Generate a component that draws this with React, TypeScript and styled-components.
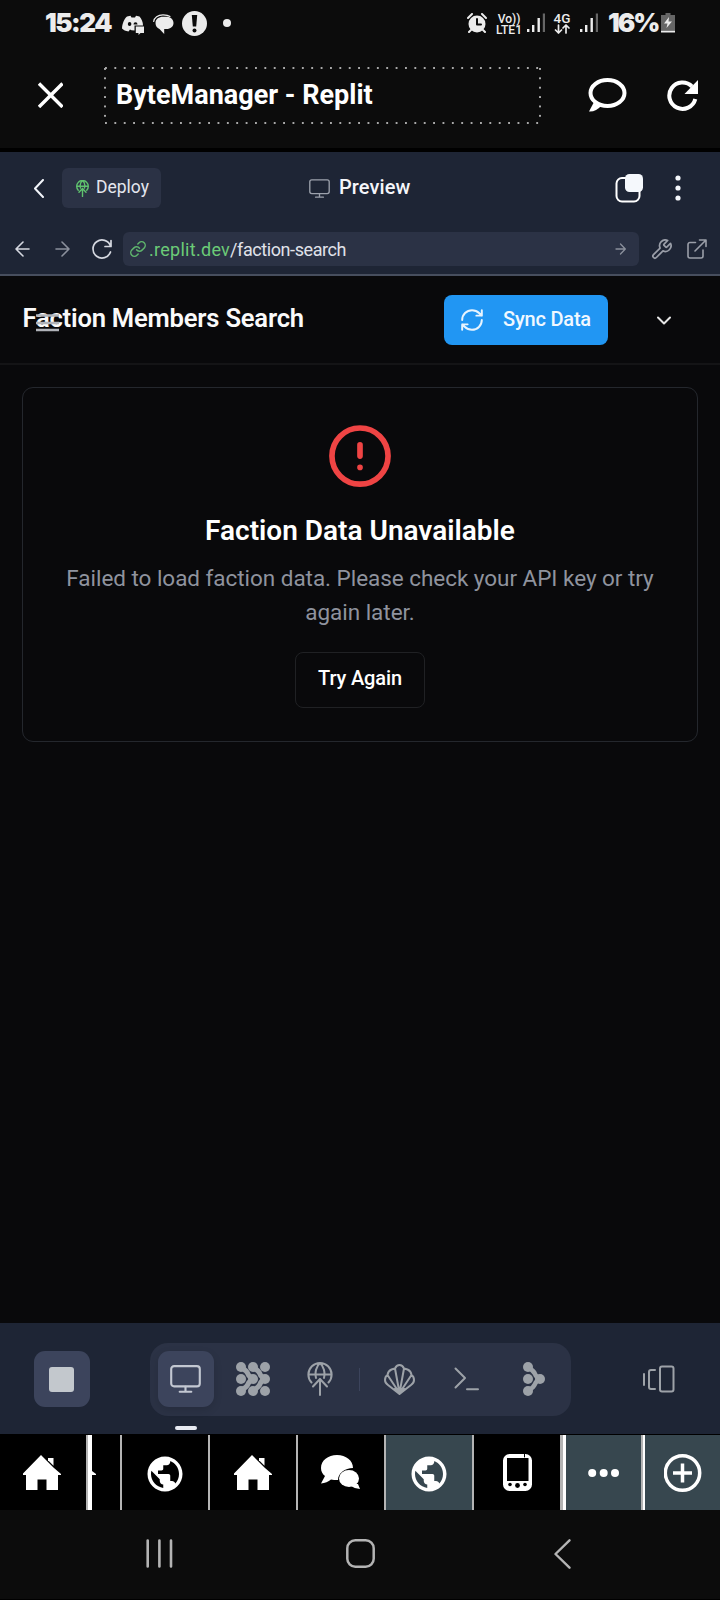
import React from "react";
import styled, { createGlobalStyle } from "styled-components";

const Global = createGlobalStyle`
  * { box-sizing: border-box; }
  html, body { margin: 0; background: #0c0c0c; }
  body { font-family: Roboto, sans-serif; color: #fff; }
  svg { display: block; flex: none; }
  button { font: inherit; color: inherit; border: 0; padding: 0; background: none; }
`;

const Screen = styled.div`
  width: 720px;
  height: 1600px;
  display: flex;
  flex-direction: column;
  overflow: hidden;
  background: #0c0c0c;
`;

const Item = styled.div<{ $ml?: number; $mt?: number }>`
  flex: none;
  margin-left: ${(p) => p.$ml ?? 0}px;
  margin-top: ${(p) => p.$mt ?? 0}px;
`;

const Label = styled.span<{ $size: number; $weight?: number; $spacing?: number; $color?: string; $width?: number }>`
  display: block;
  flex: none;
  white-space: nowrap;
  font-size: ${(p) => p.$size}px;
  font-weight: ${(p) => p.$weight ?? 400};
  letter-spacing: ${(p) => p.$spacing ?? 0}px;
  color: ${(p) => p.$color ?? "#fff"};
  width: ${(p) => (p.$width ? `${p.$width}px` : "auto")};
`;

/* ---------- status bar ---------- */
const StatusBar = styled.header`
  height: 46px;
  flex: none;
  display: flex;
  align-items: center;
  color: #ececec;
`;
const Clock = styled(Label)`
  font-family: Inter, sans-serif;
  line-height: 46px;
`;
const Network = styled.div`
  width: 26px;
  margin: 3px 0 0 9px;
  font-size: 12px;
  font-weight: 500;
  line-height: 11px;
  text-align: center;
  white-space: nowrap;
`;
const DataType = styled.div`
  width: 18px;
  height: 23px;
  margin-left: 7px;
  display: flex;
  flex-direction: column;
  align-items: center;
  font-size: 13.5px;
  font-weight: 500;
  line-height: 12px;
`;

/* ---------- title bar ---------- */
const TitleBar = styled.div`
  height: 102px;
  flex: none;
  display: flex;
  padding-left: 38px;
`;
const TitleBox = styled.div`
  width: 437px;
  height: 57px;
  margin: 21px 0 0 41px;
  padding: 0 0 2px 12px;
  display: flex;
  align-items: center;
  background-image: linear-gradient(90deg, #a8a8a8 2px, transparent 2px),
    linear-gradient(90deg, #a8a8a8 2px, transparent 2px),
    linear-gradient(#a8a8a8 2px, transparent 2px),
    linear-gradient(#a8a8a8 2px, transparent 2px);
  background-size: 9.38px 2px, 9.38px 2px, 2px 9.38px, 2px 9.38px;
  background-repeat: repeat-x, repeat-x, repeat-y, repeat-y;
  background-position: 1px 0, 1px 100%, 0 1px, 100% 1px;
`;
const Divider = styled.div`
  height: 4px;
  flex: none;
  background: #000;
`;

/* ---------- browser chrome ---------- */
const Chrome = styled.section`
  height: 124px;
  flex: none;
  background: #1e2535;
  border-bottom: 2px solid #474e5e;
`;
const ChromeRow = styled.div<{ $h: number }>`
  height: ${(p) => p.$h}px;
  display: flex;
  align-items: center;
`;
const DeployButton = styled.button`
  width: 99px;
  height: 40px;
  margin-left: 18px;
  padding-left: 14px;
  border-radius: 6px;
  background: #2b3245;
  display: flex;
  align-items: center;
`;
const AddressBar = styled.div`
  width: 516px;
  height: 34px;
  margin-left: 11px;
  padding: 0 13px 0 7px;
  border-radius: 6px;
  background: #2b3245;
  display: flex;
  align-items: center;
`;
const Url = styled(Label)`
  flex: 1;
  margin-left: 3px;
  & > span { color: #6bcb77; letter-spacing: 0.28px; }
`;

/* ---------- web page ---------- */
const Page = styled.main`
  flex: 1;
  min-height: 0;
  background: #09090b;
`;
const PageHeader = styled.div`
  position: relative;
  height: 89px;
  padding-left: 22px;
  display: flex;
  border-bottom: 2px solid #141416;
`;
const Heading = styled.h1`
  margin: 25px 0 0;
  width: 422px;
  padding-left: 0.5px;
  font-size: 25.6px;
  line-height: 34px;
  font-weight: 600;
  letter-spacing: -0.22px;
  white-space: nowrap;
  color: #fafafa;
`;
const MenuOverlay = styled.div`
  position: absolute;
  left: 36px;
  top: 37px;
`;
const SyncButton = styled.button`
  width: 164px;
  height: 50px;
  margin-top: 19px;
  padding-left: 16px;
  display: flex;
  align-items: center;
  border-radius: 8px;
  background: #2196f3;
`;
const Card = styled.section`
  width: 676px;
  height: 355px;
  margin: 22px 0 0 22px;
  padding-top: 33px;
  display: flex;
  flex-direction: column;
  align-items: center;
  border: 1px solid #24272d;
  border-radius: 11px;
`;
const CardTitle = styled.h2`
  margin: 24px 0 0;
  font-size: 28px;
  line-height: 34px;
  font-weight: 600;
  white-space: nowrap;
`;
const CardText = styled.p`
  margin: 13px 0 0;
  width: 620px;
  text-align: center;
  font-size: 22.5px;
  line-height: 34px;
  letter-spacing: -0.04px;
  color: #8f939e;
`;
const RetryButton = styled.button`
  width: 130px;
  height: 56px;
  margin-top: 23px;
  padding-bottom: 4px;
  display: flex;
  align-items: center;
  justify-content: center;
  border: 1px solid #202124;
  border-radius: 8px;
`;

/* ---------- workspace toolbar ---------- */
const Toolbar = styled.div`
  height: 111px;
  flex: none;
  padding: 20px 0 0 33.5px;
  display: flex;
  background: #1e2535;
`;
const Tile = styled.button`
  width: 56px;
  height: 56px;
  flex: none;
  display: flex;
  align-items: center;
  justify-content: center;
  border-radius: 11px;
  background: #3c445c;
`;
const StopTile = styled(Tile)`
  margin-top: 8px;
`;
const StopSquare = styled.span`
  width: 25px;
  height: 25px;
  border-radius: 3px;
  background: #c3c8cd;
`;
const Dock = styled.div`
  width: 421px;
  height: 73px;
  margin-left: 60px;
  padding: 8px 0 0 8px;
  display: flex;
  align-items: flex-start;
  border-radius: 18px;
  background: #2b3245;
`;
const ActiveColumn = styled.div`
  display: flex;
  flex-direction: column;
  align-items: center;
  button { box-shadow: 0 3px 8px rgba(0, 0, 0, 0.12); }
`;
const Indicator = styled.span`
  width: 22px;
  height: 4px;
  margin-top: 19px;
  border-radius: 2px;
  background: #e8ebf2;
`;
const DockRule = styled.span`
  width: 1px;
  height: 23px;
  margin: 17px 0 0 26px;
  background: #3c445c;
`;

/* ---------- tab strip ---------- */
const TabStrip = styled.nav`
  height: 76px;
  flex: none;
  display: flex;
  border-top: 1px solid #000;
  background: #000;
`;
const Tab = styled.div<{ $w: number; $on?: boolean }>`
  width: ${(p) => p.$w}px;
  flex: none;
  display: flex;
  align-items: center;
  justify-content: center;
  overflow: hidden;
  background: ${(p) => (p.$on ? "#37474f" : "#000")};
`;
const Rule = styled.span<{ $w: number; $c?: string }>`
  width: ${(p) => p.$w}px;
  flex: none;
  background: ${(p) => p.$c ?? "#b4b4b4"};
`;

/* ---------- system navigation ---------- */
const SystemNav = styled.footer`
  height: 90px;
  flex: none;
  display: flex;
  padding-top: 29px;
  border-bottom: 1px solid #000;
`;

type DrawProps = { w: number; h: number; vb?: string; c?: string; sw?: number; fill?: boolean; children: React.ReactNode };
const Draw = ({ w, h, vb, c = "#fff", sw = 2, fill, children }: DrawProps) => (
  <svg
    width={w}
    height={h}
    viewBox={vb ?? `0 0 ${w} ${h}`}
    fill={fill ? c : "none"}
    stroke={fill ? "none" : c}
    strokeWidth={sw}
    strokeLinecap="round"
    strokeLinejoin="round"
  >
    {children}
  </svg>
);

const Signal = () => (
  <Draw w={19} h={20} fill c="#ececec">
    <rect x="0" y="16" width="2.4" height="3" />
    <rect x="5" y="12" width="2.4" height="7" />
    <rect x="10.5" y="5" width="2.4" height="14" />
    <rect x="15.8" y="0.5" width="2.2" height="18.5" fill="#666" />
  </Draw>
);

const House = () => (
  <Draw w={38} h={36} fill>
    <path d="M18 0 31 13 38 19v1h-3v15H23.500V24.500h-9V35H3V20H0v-1.500Z" />
    <path d="M25 3h5.500v7.800L25 5.300Z" />
  </Draw>
);

const Globe = () => (
  <Draw w={42} h={42} vb="0 0 24 24" fill>
    <path d="M12 2C6.480 2 2 6.480 2 12s4.480 10 10 10 10-4.480 10-10S17.520 2 12 2zm-1 17.930c-3.950-.49-7-3.850-7-7.930 0-.62.08-1.210.21-1.790L9 15v1c0 1.100.9 2 2 2v1.930zm6.900-2.540c-.26-.81-1-1.390-1.900-1.390h-1v-3c0-.55-.45-1-1-1H8v-2h2c.55 0 1-.45 1-1V7h2c1.100 0 2-.9 2-2v-.41c2.930 1.190 5 4.060 5 7.410 0 2.080-.8 3.970-2.100 5.390z" />
  </Draw>
);

const GlobeArrow = ({ w, h, c, sw }: { w: number; h: number; c: string; sw: number }) => (
  <Draw w={w} h={h} vb="0 0 26 34" c={c} sw={sw}>
    <path d="M4.500 20.500A11.600 11.600 0 1 1 21.500 20.500M1.500 12.500h23M9 16C7.800 11 9 4 13 1.200 17 4 18.200 11 17 16M13 33V17M6 24.500 13 17l7 7.500" />
  </Draw>
);

const Monitor = ({ w, h, c, sw }: { w: number; h: number; c: string; sw: number }) => (
  <Draw w={w} h={h} vb="0 0 32 29" c={c} sw={sw}>
    <rect x="1.200" y="1.200" width="29.600" height="21" rx="3" />
    <path d="M16 22.500v5M10 27.700h12" />
  </Draw>
);

const dock = "#9da2a8";

export default function App() {
  return (
    <>
      <Global />
      <Screen>
        <StatusBar>
          <Item $ml={45}>
            <Clock $size={26} $weight={900} $spacing={-1.5} $color="#ececec" $width={77}>15:24</Clock>
          </Item>
          <Item $mt={3}>
            <Draw w={23} h={20} fill c="#ececec">
              <path d="M5 1.500 8.500.8l1 1.600h3.500l1-1.600 3.500.8C19.700 4.500 21 7 21 10.500h-8.500v5l-3-.3-1.500-.7-1.500 2C3.500 16 1.500 15 0 13.500.2 9 2 4 5 1.500Z" />
              <ellipse cx="7.600" cy="9" rx="1.800" ry="2.100" fill="#0c0c0c" />
              <path d="M11.500 9.500a2 2.200 0 1 1 4 0" fill="#0c0c0c" />
              <path d="M13.800 11.500H22v6.500h-3.500l-2 2v-2h-2.700Z" />
            </Draw>
          </Item>
          <Item $ml={8} $mt={2}>
            <Draw w={21} h={21} fill c="#ececec">
              <path d="M2.500 9C2.500 5 6 2.800 10 2.800h3.500c4 0 7 2.700 7 6.200s-3 6-7 6h-2.300V20L6.500 15C4 13.800 2.500 12 2.500 9Z" />
              <path d="M.7 7.500C1 3.500 5 .8 10 .8c3 0 5.500.5 7 1.700" fill="none" stroke="#ececec" strokeWidth="1.200" />
            </Draw>
          </Item>
          <Item $ml={8} $mt={1}>
            <Draw w={25} h={25} fill c="#ececec">
              <circle cx="12.500" cy="12.500" r="12.500" />
              <path d="M9.800 4h5.400l-1 11.500h-3.400Z" fill="#0c0c0c" />
              <circle cx="12.500" cy="19.500" r="2" fill="#0c0c0c" />
            </Draw>
          </Item>
          <Item $ml={16}>
            <Draw w={8} h={8} fill c="#ececec"><circle cx="4" cy="4" r="4" /></Draw>
          </Item>
          <Item $ml={236}>
            <Draw w={20} h={20} c="#ececec">
              <circle cx="10" cy="11" r="8.500" fill="#ececec" stroke="none" />
              <path d="M1 5 5 1M19 5l-4-4M4 17l-2 2M16 17l2 2" />
              <path d="M10 6v5.500h4" stroke="#0c0c0c" />
            </Draw>
          </Item>
          <Network>Vo))<br />LTE1</Network>
          <Item $ml={5}><Signal /></Item>
          <DataType>
            4G
            <Draw w={16} h={10} c="#ececec" sw={1.7}><path d="M4.500 1v8M1.500 6l3 3 3-3M12 9V1M9 4l3-3 3 3" /></Draw>
          </DataType>
          <Item $ml={9}><Signal /></Item>
          <Item $ml={9}>
            <Clock $size={26} $weight={900} $spacing={-2} $color="#ececec" $width={53}>16%</Clock>
          </Item>
          <Draw w={14} h={20} fill c="#666">
            <path d="M4.500 0h5v2H14v15H0V2h4.500Z" />
            <path d="M8 4 3 10.500h3.500L5.500 15 11 8.500H7.500Z" fill="#ececec" />
            <rect y="17.500" width="14" height="2" fill="#ececec" />
          </Draw>
        </StatusBar>
        <TitleBar>
          <Item $mt={36}>
            <Draw w={25} h={26} sw={3.4}><path d="M1 1.500 24.500 25M24.500 1.500 1 25" strokeLinecap="butt" /></Draw>
          </Item>
          <TitleBox>
            <Label $size={27} $weight={700}>ByteManager - Replit</Label>
          </TitleBox>
          <Item $ml={47} $mt={32}>
            <Draw w={39} h={34} sw={4}>
              <ellipse cx="19.500" cy="15" rx="17" ry="13" />
              <path d="M6 24 1 33.500Q8 34 13.500 27.500Z" fill="#fff" stroke="none" />
            </Draw>
          </Item>
          <Item $ml={40} $mt={34}>
            <Draw w={32} h={32} sw={4}>
              <path d="M28.300 19A13.200 13.200 0 1 1 25 6.500" strokeLinecap="butt" />
              <path d="M31 0v14H17.500Z" fill="#fff" stroke="none" />
            </Draw>
          </Item>
        </TitleBar>
        <Divider />
        <Chrome>
          <ChromeRow $h={72}>
            <Item $ml={34}><Draw w={10} h={19} c="#f2f5fa"><path d="m9 1-8 8.500 8 8.500" /></Draw></Item>
            <DeployButton>
              <GlobeArrow w={13} h={17} c="#5fc26e" sw={2.8} />
              <Item $ml={7} $mt={-3}><Label $size={17.5} $color="#e4e6ee">Deploy</Label></Item>
            </DeployButton>
            <Item $ml={148}><Monitor w={21} h={19} c="#9da2ad" sw={2} /></Item>
            <Item $ml={9} $mt={-2}><Label $size={20} $weight={500} $spacing={0.1} $color="#f5f6fa" $width={276}>Preview</Label></Item>
            <Draw w={29} h={29}>
              <rect x="1.500" y="4" width="23" height="23.500" rx="5.500" />
              <rect x="10" y="0" width="18" height="18" rx="4.500" fill="#f5f8fc" stroke="none" />
            </Draw>
            <Item $ml={31}>
              <Draw w={6} h={26} fill c="#f5f8fc"><circle cx="3" cy="3" r="2.600" /><circle cx="3" cy="13" r="2.600" /><circle cx="3" cy="23" r="2.600" /></Draw>
            </Item>
          </ChromeRow>
          <ChromeRow $h={50}>
            <Item $ml={15}><Draw w={15} h={16} c="#d5d8e0" sw={1.6}><path d="M14 8H1M8 1 1 8l7 7" /></Draw></Item>
            <Item $ml={25}><Draw w={15} h={16} c="#8b909c" sw={1.6}><path d="M1 8h13M7 1l7 7-7 7" /></Draw></Item>
            <Item $ml={22}><Draw w={20} h={20} c="#d5d8e0" sw={1.7}><path d="M19 1.500v6h-6M18.500 7A9 9 0 1 0 18.500 13" /></Draw></Item>
            <AddressBar>
              <Draw w={16} h={16} vb="1 1 22 22" c="#5fb56d" sw={2}>
                <path d="M10 13a5 5 0 0 0 7.540.54l3-3a5 5 0 0 0-7.070-7.070l-1.720 1.710" />
                <path d="M14 11a5 5 0 0 0-7.540-.54l-3 3a5 5 0 0 0 7.070 7.070l1.710-1.710" />
              </Draw>
              <Url $size={18} $spacing={-0.42} $color="#e0e2ea"><span>.replit.dev</span>/faction-search</Url>
              <Draw w={11} h={12} c="#8b909c" sw={1.3}><path d="M1 6h9M5.500 1 10.300 6l-4.800 5" /></Draw>
            </AddressBar>
            <Item $ml={12}>
              <Draw w={21} h={21} vb="1 1 22 22" c="#9a9ea8" sw={1.8}>
                <path d="M14.700 6.300a1 1 0 0 0 0 1.400l1.600 1.600a1 1 0 0 0 1.400 0l3.770-3.770a6 6 0 0 1-7.940 7.940l-6.910 6.910a2.120 2.120 0 0 1-3-3l6.910-6.910a6 6 0 0 1 7.940-7.940l-3.760 3.760z" />
              </Draw>
            </Item>
            <Item $ml={15}>
              <Draw w={20} h={20} c="#9a9ea8" sw={1.6}><path d="M12.500 1H19v6.500M19 1 8 12M8.500 3.500H3a2 2 0 0 0-2 2V17a2 2 0 0 0 2 2h11a2 2 0 0 0 2-2v-6" /></Draw>
            </Item>
          </ChromeRow>
        </Chrome>
        <Page>
          <PageHeader>
            <Heading>Faction Members Search</Heading>
            <MenuOverlay>
              <Draw w={23} h={19} c="#b0b3b9" sw={2.4}><path d="M0 2.500h23M0 10h23M0 17h23" strokeLinecap="butt" /></Draw>
            </MenuOverlay>
            <SyncButton>
              <Draw w={24} h={24} vb="1 1 22 22" c="#e8f4fe" sw={1.8}>
                <path d="M3 12a9 9 0 0 1 9-9 9.750 9.750 0 0 1 6.740 2.740L21 8M21 3v5h-5M21 12a9 9 0 0 1-9 9 9.750 9.750 0 0 1-6.740-2.740L3 16M8 16H3v5" />
              </Draw>
              <Item $ml={19} $mt={-2}><Label $size={20} $weight={500} $spacing={-0.2} $color="#f0f8ff">Sync Data</Label></Item>
            </SyncButton>
            <Item $ml={49} $mt={40}><Draw w={14} h={9} c="#e6e6e6"><path d="m1 1.500 6 6 6-6" /></Draw></Item>
          </PageHeader>
          <Card>
            <Draw w={68} h={69} vb="0 -0.2 24 24" c="#ef4444">
              <circle cx="12" cy="12" r="9.900" /><path d="M12 8v4M12 16h.01" />
            </Draw>
            <CardTitle>Faction Data Unavailable</CardTitle>
            <CardText>Failed to load faction data. Please check your API key or try again later.</CardText>
            <RetryButton><Label $size={20} $weight={500} $spacing={-0.15}>Try Again</Label></RetryButton>
          </Card>
        </Page>
        <Toolbar>
          <StopTile><StopSquare /></StopTile>
          <Dock>
            <ActiveColumn>
              <Tile><Monitor w={31} h={28} c="#c3c8d2" sw={2.2} /></Tile>
              <Indicator />
            </ActiveColumn>
            <Item $ml={22} $mt={11}>
              <Draw w={34} h={34} fill c={dock}>
                {[5, 17, 29].map((y) => [5, 17, 29].map((x) => <circle key={`${x}-${y}`} cx={x} cy={y} r="5" />))}
                <path d="M6 6Q11 9 12 12T18 17Q13 19 12 22T6 28M18 6Q23 9 24 12T29 17Q25 19 24 22T18 28" fill="none" stroke={dock} strokeWidth="5" />
              </Draw>
            </Item>
            <Item $ml={37} $mt={11}><GlobeArrow w={26} h={34} c={dock} sw={2} /></Item>
            <DockRule />
            <Item $ml={24} $mt={13}>
              <Draw w={31} h={31} c={dock} sw={2}>
                <path d="M15.500 30 4 21Q1 19 1 16 1 12.500 3.500 11 4 7 7.500 5.500 9 5 11 4.500 12.500 1 15.500 1T20 4.500Q22 5 23.500 5.500 27 7 27.500 11 30 12.500 30 16 30 19 27 21ZM15.500 29 3.500 11M15.500 29 11 4.500M15.500 29 20 4.500M15.500 29 27.500 11M15.500 29l-5-4h10Z" />
              </Draw>
            </Item>
            <Item $ml={39} $mt={16}><Draw w={26} h={24} c={dock} sw={2}><path d="m1.500 1.500 9.500 9.500-9.500 9.500M13 22.200h11" /></Draw></Item>
            <Item $ml={43} $mt={11}>
              <Draw w={23} h={34} fill c={dock}>
                <circle cx="5" cy="5" r="5" /><circle cx="5" cy="17" r="5" /><circle cx="5" cy="29" r="5" /><circle cx="17" cy="17" r="5" />
                <path d="M6 6Q11 9 12 12T17 17Q13 19 12 22T6 28" fill="none" stroke={dock} strokeWidth="4.500" />
              </Draw>
            </Item>
          </Dock>
          <Item $ml={71} $mt={22}>
            <Draw w={33} h={28} c={dock} sw={2}><path d="M2 9v11M13 5H9Q7 5 7 7v15q0 2 2 2h4" /><rect x="18" y="1.500" width="13.500" height="25" rx="2" /></Draw>
          </Item>
        </Toolbar>
        <TabStrip>
          <Tab $w={86}><Item $ml={-2}><House /></Item></Tab>
          <Rule $w={2} /><Rule $w={4} $c="#fff" />
          <Tab $w={28}><Item $ml={-24}><Draw w={4} h={4} fill><path d="M0 0 4 3v1H0Z" /></Draw></Item></Tab>
          <Rule $w={2} />
          <Tab $w={86}><Item $mt={3}><Globe /></Item></Tab>
          <Rule $w={2} />
          <Tab $w={86}><Item $ml={-1}><House /></Item></Tab>
          <Rule $w={2} />
          <Tab $w={86}>
            <Draw w={40} h={36} fill>
              <path d="M16 0c9 0 16 5.500 16 13-8 0-15 5-15 12-3 0-5 0-7-.5Q6 28 0 28.500L4 21C1.500 19 0 16.500 0 13 0 5.500 7 0 16 0Z" />
              <ellipse cx="28" cy="23.500" rx="10" ry="8.500" />
              <path d="M32 29h5l2 5q-5 0-9-3Z" />
            </Draw>
          </Tab>
          <Rule $w={2} />
          <Tab $w={86} $on><Item $mt={3}><Globe /></Item></Tab>
          <Rule $w={2} />
          <Tab $w={86}>
            <Draw w={29} h={37} sw={3}>
              <rect x="1.500" y="1.500" width="26" height="34" rx="5" fill="#fff" />
              <rect x="4" y="4" width="21.500" height="23" fill="#000" stroke="none" />
              <path d="M21.500 0v3" stroke="#000" strokeWidth="1" />
              <g fill="#000" stroke="none"><circle cx="7" cy="30.500" r="1.800" /><circle cx="14.500" cy="31.500" r="2.400" /><circle cx="22" cy="30.500" r="1.800" /></g>
            </Draw>
          </Tab>
          <Rule $w={3} /><Rule $w={3} $c="#fff" />
          <Tab $w={75} $on>
            <Draw w={32} h={8} fill><circle cx="4.200" cy="4" r="4" /><circle cx="15.700" cy="4" r="4" /><circle cx="27" cy="4" r="4" /></Draw>
          </Tab>
          <Rule $w={2} /><Rule $w={2} $c="#fff" />
          <Tab $w={75} $on>
            <Draw w={38} h={38} sw={3.5}><circle cx="18.500" cy="19" r="17.200" /><path d="M18.500 9.500v19M9 19h19" strokeLinecap="butt" /></Draw>
          </Tab>
        </TabStrip>
        <SystemNav>
          <Item $ml={146}><Draw w={27} h={29} c="#b4b4b4" sw={2.6}><path d="M1.700 1.500v26M13.400 1.500v26M25 1.500v26" /></Draw></Item>
          <Item $ml={173}><Draw w={29} h={29} c="#b4b4b4" sw={2.5}><rect x="1.300" y="1.300" width="26.400" height="26.400" rx="8" /></Draw></Item>
          <Item $ml={179}><Draw w={17} h={30} c="#b4b4b4" sw={2.4}><path d="M15.500 1.300 1.500 15l14 13.700" /></Draw></Item>
        </SystemNav>
      </Screen>
    </>
  );
}
